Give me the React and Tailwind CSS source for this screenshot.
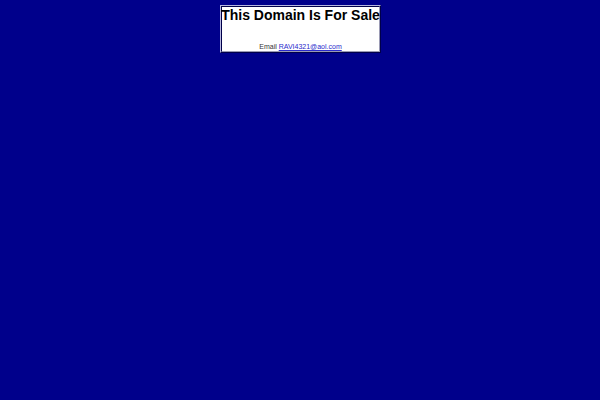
export default function App() {
  return (
    <div
      className="flex h-[400px] w-full justify-center bg-[#00008b] pt-[5px]"
      style={{ fontFamily: '"Liberation Sans", Arial, sans-serif' }}
    >
      <div className="ml-px h-[48px] w-[161px] border border-t-[#b8b8e0] border-l-[#b8b8e0] border-b-[#00004a] border-r-[#00004a]">
        <div className="flex h-full flex-col items-center border border-t-[#00004a] border-l-[#00004a] border-b-[#9a9ab4] border-r-[#9a9ab4] bg-white">
          <div className="whitespace-nowrap text-[14px] font-bold leading-[16px] text-black">
            This Domain Is For Sale
          </div>
          <div className="h-[21px]" />
          <div className="whitespace-nowrap text-[7px] leading-[8px] text-[#333333]">
            Email{' '}
            <a href="#" className="text-[#2a2acc] underline decoration-[#2a2acc] underline-offset-1">
              RAVI4321@aol.com
            </a>
          </div>
        </div>
      </div>
    </div>
  );
}
